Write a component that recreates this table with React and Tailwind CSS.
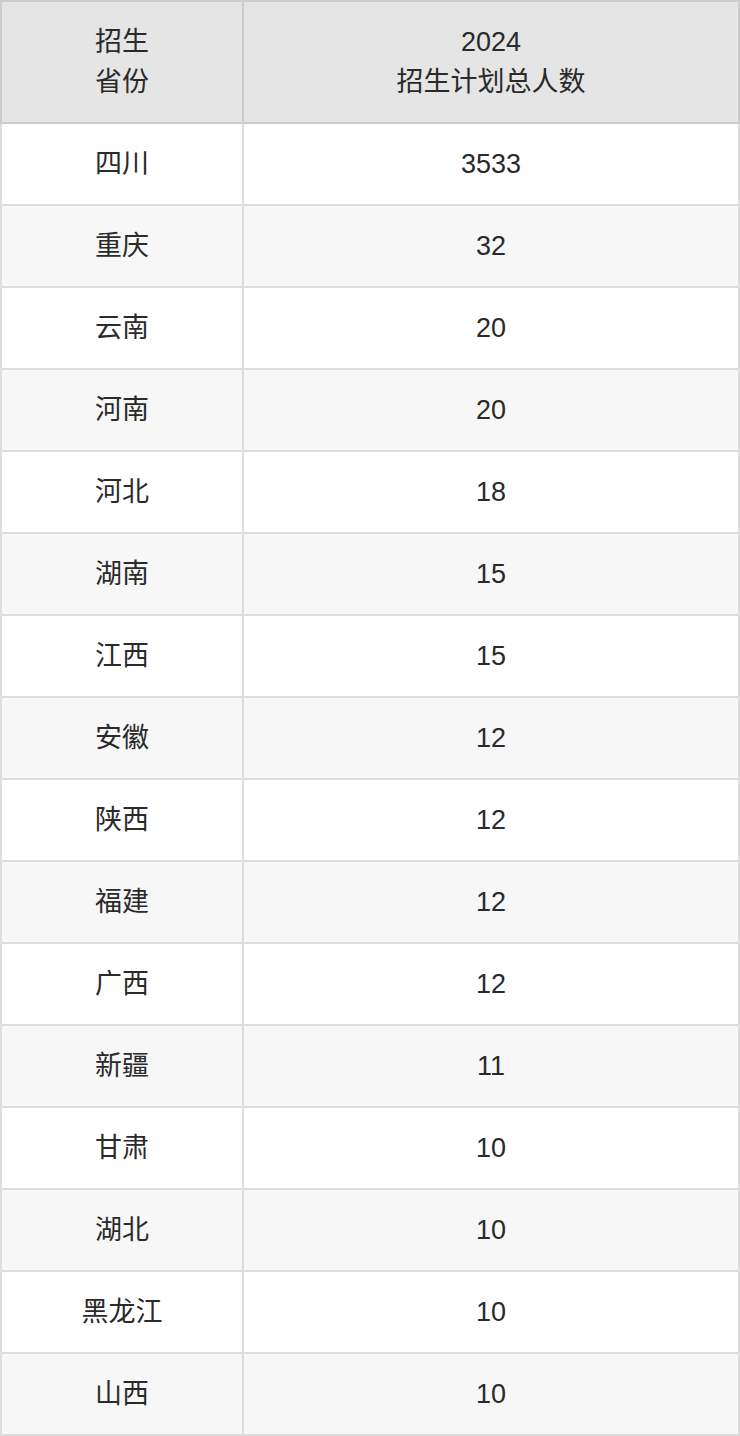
import React from "react";

const rows = [
  ["四川", "3533"],
  ["重庆", "32"],
  ["云南", "20"],
  ["河南", "20"],
  ["河北", "18"],
  ["湖南", "15"],
  ["江西", "15"],
  ["安徽", "12"],
  ["陕西", "12"],
  ["福建", "12"],
  ["广西", "12"],
  ["新疆", "11"],
  ["甘肃", "10"],
  ["湖北", "10"],
  ["黑龙江", "10"],
  ["山西", "10"],
];

const App = () => {
  return (
    <div className="w-[740px] bg-white text-[#2a2a2a] font-['Liberation_Sans','Noto_Sans_CJK_SC',sans-serif]">
      <table className="w-full border-collapse text-[27px] leading-[40px] text-center">
        <thead>
          <tr className="bg-[#e5e5e5]">
            <th className="w-[242px] border-2 border-[#ccc] py-[20px] font-normal">
              招生
              <br />
              省份
            </th>
            <th className="border-2 border-[#ccc] py-[20px] font-normal">
              2024
              <br />
              招生计划总人数
            </th>
          </tr>
        </thead>
        <tbody>
          {rows.map((r, i) => (
            <tr key={i} className={i % 2 === 1 ? "bg-[#f7f7f7]" : "bg-white"}>
              <td className="border-2 border-[#ddd] py-[20px]">{r[0]}</td>
              <td className="border-2 border-[#ddd] py-[20px]">{r[1]}</td>
            </tr>
          ))}
        </tbody>
      </table>
    </div>
  );
};

export default App;
